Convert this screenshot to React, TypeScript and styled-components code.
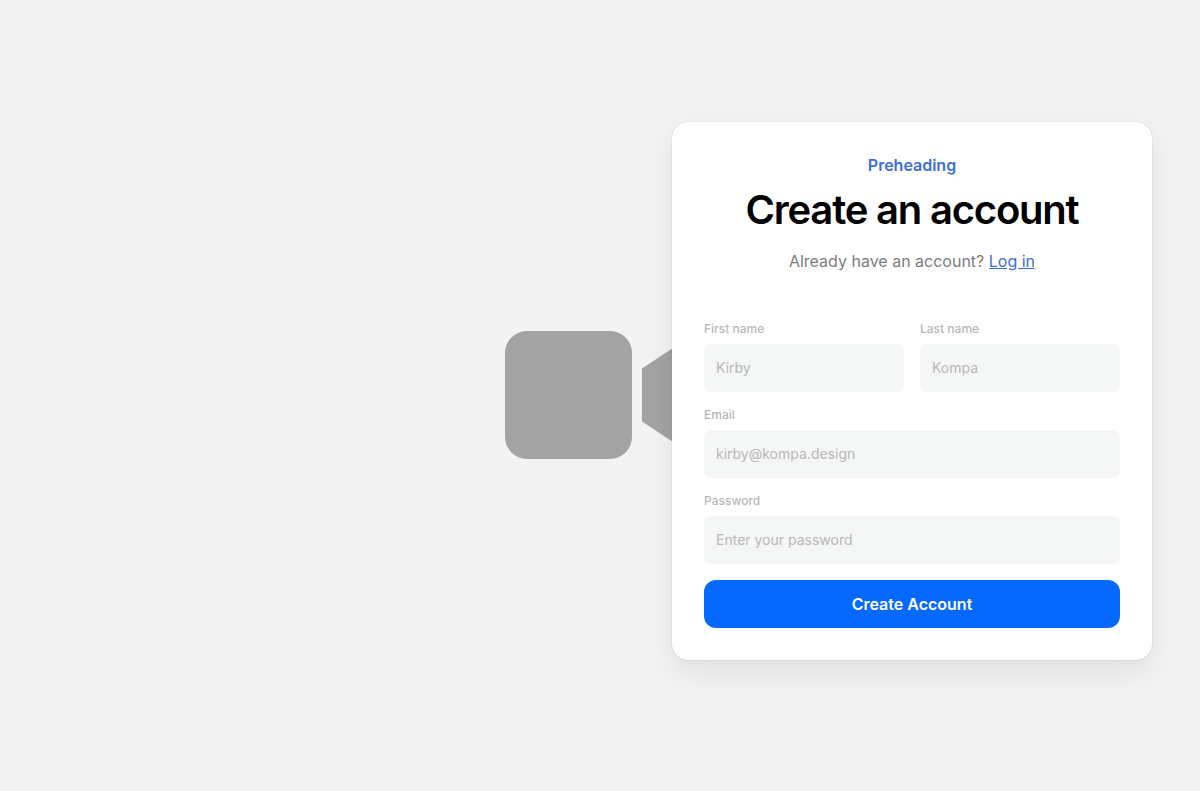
import React from "react";
import styled, { createGlobalStyle } from "styled-components";

const GlobalStyle = createGlobalStyle`
  *, *::before, *::after { box-sizing: border-box; }
  body {
    margin: 0;
    background: #f3f3f3;
    font-family: Inter, "Liberation Sans", sans-serif;
    color: #000;
  }
`;

const Stage = styled.main`
  display: grid;
  grid-template: 1fr / 1fr;
  align-items: center;
  min-height: 100vh;
`;

const CameraIcon = styled.svg`
  grid-area: 1 / 1;
  justify-self: center;
  width: 190px;
  height: 128px;
  margin-bottom: 1px;
  fill: #a3a3a3;
`;

const Card = styled.section`
  grid-area: 1 / 1;
  justify-self: end;
  position: relative;
  width: min(480px, 100% - 96px);
  margin: 24px 48px 34px;
  padding: 32px;
  border-radius: 16px;
  background: #fff;
  box-shadow:
    0 0 1px rgba(0, 0, 0, 0.25),
    0 1px 2px rgba(0, 0, 0, 0.03),
    0 12px 32px rgba(0, 0, 0, 0.08);
`;

const Header = styled.header`
  text-align: center;
`;

const Preheading = styled.p`
  margin: 0 0 10px;
  font-size: 16px;
  font-weight: 600;
  line-height: 22px;
  color: #3b70d8;
`;

const Title = styled.h1`
  margin: 0 0 16px;
  font-size: 40px;
  font-weight: 600;
  line-height: 48px;
  letter-spacing: -0.03em;
`;

const Subtitle = styled.p`
  margin: 0;
  font-size: 16px;
  line-height: 22px;
  color: #7d7d7d;
`;

const TextLink = styled.a`
  color: #3b70d8;
  text-decoration: underline;
`;

const Form = styled.form`
  display: grid;
  grid-template-columns: 1fr 1fr;
  gap: 16px;
  margin-top: 50px;
`;

const Field = styled.div<{ $wide?: boolean }>`
  display: flex;
  flex-direction: column;
  gap: 8px;
  min-width: 0;
  grid-column: ${(p) => (p.$wide ? "1 / -1" : "auto")};
`;

const Label = styled.label`
  font-size: 12px;
  font-weight: 500;
  line-height: 14px;
  color: #b8b8b8;
`;

const Input = styled.input`
  width: 100%;
  height: 48px;
  padding: 0 12px;
  border: 0;
  border-radius: 8px;
  background: #f5f6f6;
  font: inherit;
  font-size: 14px;
  color: #222;

  &::placeholder {
    color: #b8b8b8;
    opacity: 1;
  }
`;

const SubmitButton = styled.button`
  grid-column: 1 / -1;
  height: 48px;
  border: 0;
  border-radius: 12px;
  background: #0569ff;
  font: inherit;
  font-size: 16px;
  font-weight: 600;
  color: #fff;
  cursor: pointer;
`;

interface FieldSpec {
  id: string;
  label: string;
  placeholder: string;
  type: string;
  wide?: boolean;
}

const fields: FieldSpec[] = [
  { id: "first-name", label: "First name", placeholder: "Kirby", type: "text" },
  { id: "last-name", label: "Last name", placeholder: "Kompa", type: "text" },
  { id: "email", label: "Email", placeholder: "kirby@kompa.design", type: "email", wide: true },
  { id: "password", label: "Password", placeholder: "Enter your password", type: "password", wide: true },
];

export default function App() {
  return (
    <>
      <GlobalStyle />
      <Stage>
        <CameraIcon viewBox="0 0 190 128" aria-hidden="true">
          <rect x="0" y="0" width="127" height="128" rx="22" />
          <path d="M137 37.5L190 2.5V125.5L137 90.5Z" />
        </CameraIcon>
        <Card>
          <Header>
            <Preheading>Preheading</Preheading>
            <Title>Create an account</Title>
            <Subtitle>
              Already have an account? <TextLink href="#login">Log in</TextLink>
            </Subtitle>
          </Header>
          <Form onSubmit={(e) => e.preventDefault()}>
            {fields.map((f) => (
              <Field key={f.id} $wide={f.wide}>
                <Label htmlFor={f.id}>{f.label}</Label>
                <Input id={f.id} type={f.type} placeholder={f.placeholder} />
              </Field>
            ))}
            <SubmitButton type="submit">Create Account</SubmitButton>
          </Form>
        </Card>
      </Stage>
    </>
  );
}
